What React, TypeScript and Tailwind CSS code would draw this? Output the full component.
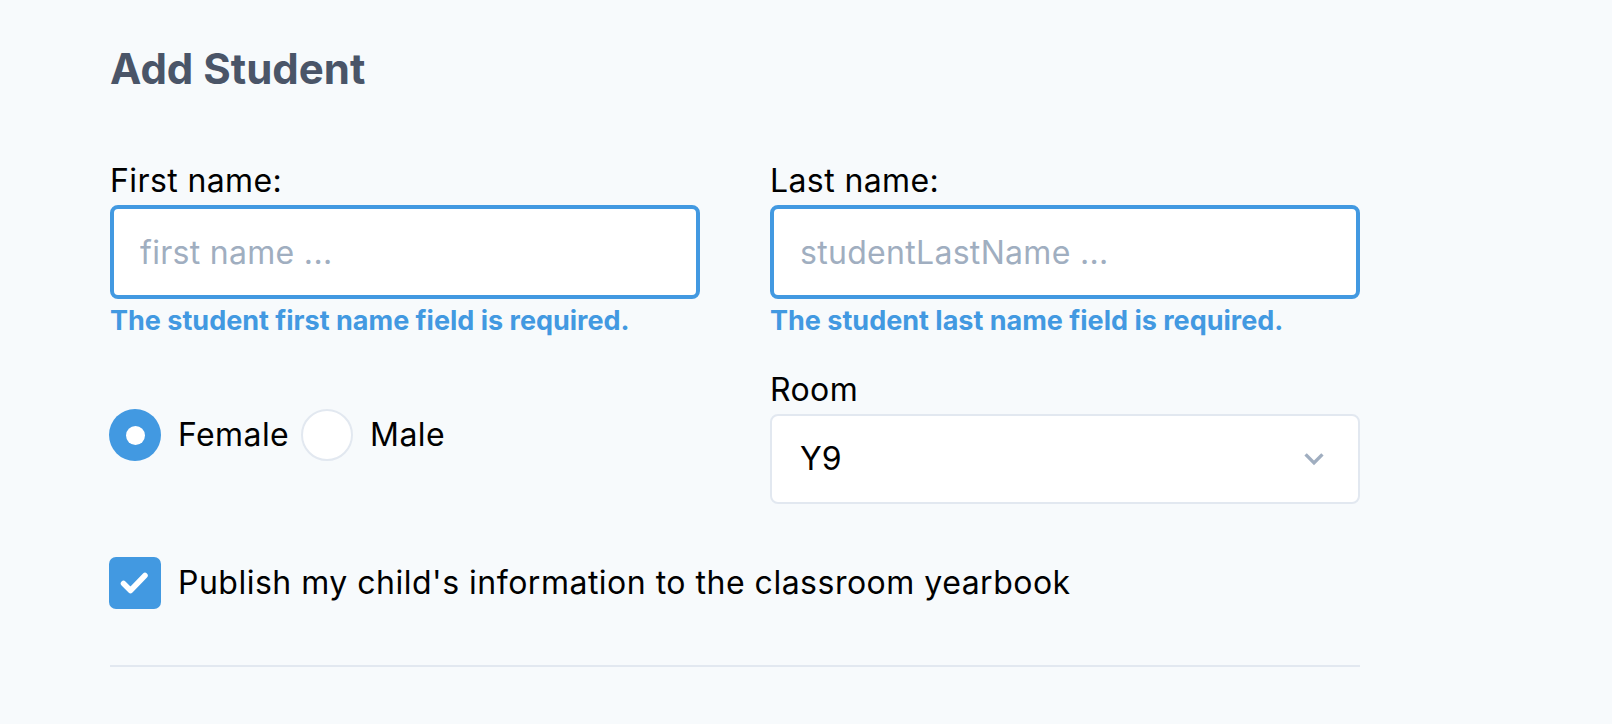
import React from 'react';

function Field({ label, placeholder, error }: { label: string; placeholder: string; error: string }) {
  return (
    <div className="flex flex-col">
      <label className="text-[32px] leading-[48px] tracking-[0.4px] text-black">{label}</label>
      <input
        className="h-[94px] w-full rounded-[8px] border-[4px] border-[#4299e1] bg-white pl-[26px] text-[32px] tracking-[0.3px] text-black outline-none placeholder:text-[#a0aec0]"
        placeholder={placeholder}
      />
      <p className="mt-[4px] text-[27px] leading-[36px] font-bold text-[#4299e1]">{error}</p>
    </div>
  );
}

function Radio({ checked, label }: { checked?: boolean; label: string }) {
  return (
    <div className="flex items-center">
      {checked ? (
        <div className="flex h-[52px] w-[52px] items-center justify-center rounded-full bg-[#4299e1]">
          <div className="h-[19px] w-[19px] rounded-full bg-white" />
        </div>
      ) : (
        <div className="h-[52px] w-[52px] rounded-full border-[2px] border-[#e2e8f0] bg-white" />
      )}
      <span className="ml-[17px] text-[32px] leading-[48px] tracking-[0.4px] text-black">{label}</span>
    </div>
  );
}

export default function App() {
  return (
    <div className="min-h-screen bg-[#f7fafc] pl-[109px] pt-[44px] font-['Inter',sans-serif]">
      <div className="w-[1251px]">
        <h1 className="pl-[1px] text-[42px] leading-[50px] font-bold text-[#4a5568]">Add Student</h1>

        <div className="mt-[63px] grid grid-cols-2 gap-x-[70px] pl-[1px]">
          <Field label="First name:" placeholder="first name ..." error="The student first name field is required." />
          <Field label="Last name:" placeholder="studentLastName ..." error="The student last name field is required." />
        </div>

        <div className="mt-[27px] grid grid-cols-2 items-center gap-x-[70px] pl-[1px]">
          <div className="-ml-[1px] flex items-center gap-[12px]">
            <Radio checked label="Female" />
            <Radio label="Male" />
          </div>
          <div className="flex flex-col">
            <label className="text-[32px] leading-[48px] tracking-[0.4px] text-black">Room</label>
            <div className="flex h-[90px] items-center justify-between rounded-[8px] border-[2px] border-[#e2e8f0] bg-white pl-[28px] pr-[27px]">
              <span className="text-[32px] text-black">Y9</span>
              <svg viewBox="0 0 20 20" className="h-[34px] w-[34px] fill-[#a0aec0]">
                <path d="M9.293 12.95l.707.707L15.657 8l-1.414-1.414L10 10.828 5.757 6.586 4.343 8z" />
              </svg>
            </div>
          </div>
        </div>

        <div className="mt-[53px] flex items-center">
          <div className="h-[52px] w-[52px] rounded-[7px] bg-[#4299e1]">
            <svg viewBox="0 0 52 52" className="h-[52px] w-[52px]">
              <path d="M14.5 26.5 L21.5 33.5 L36 18.5" fill="none" stroke="white" strokeWidth="5.5" strokeLinecap="round" strokeLinejoin="round" />
            </svg>
          </div>
          <span className="ml-[17px] text-[32px] leading-[48px] tracking-[0.5px] text-black">
            Publish my child's information to the classroom yearbook
          </span>
        </div>

        <div className="ml-[1px] mt-[56px] border-t-[2px] border-[#e2e8f0]" />
      </div>
    </div>
  );
}
